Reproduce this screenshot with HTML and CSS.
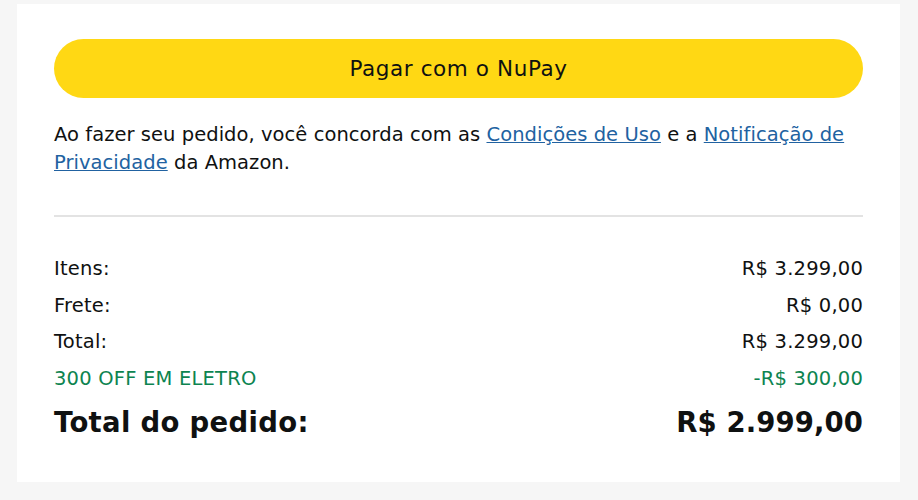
FILE: index.html
```html
<!DOCTYPE html>
<html lang="pt-BR">
<head>
<meta charset="utf-8">
<link rel="stylesheet" href="styles.css">
</head>
<body>
<div class="card">
  <button class="pay-btn">Pagar com o NuPay</button>
  <p class="terms">Ao fazer seu pedido, você concorda com as <a href="#">Condições de Uso</a> e a <a href="#">Notificação de Privacidade</a> da Amazon.</p>
  <hr class="divider">
  <div class="summary">
    <div class="row"><span>Itens:</span><span>R$ 3.299,00</span></div>
    <div class="row"><span>Frete:</span><span>R$ 0,00</span></div>
    <div class="row"><span>Total:</span><span>R$ 3.299,00</span></div>
    <div class="row promo"><span>300 OFF EM ELETRO</span><span>-R$ 300,00</span></div>
    <div class="row grand"><span>Total do pedido:</span><span>R$ 2.999,00</span></div>
  </div>
</div>
</body>
</html>
```
FILE: styles.css
```css
html, body {
  margin: 0;
  background: #f6f6f6;
  font-family: "DejaVu Sans", "Noto Sans", sans-serif;
  color: #0f1111;
}
.card {
  background: #fff;
  margin: 4px 18px 0 17px;
  height: 478px;
  box-sizing: border-box;
  padding: 35px 37px 0 37px;
}
.pay-btn {
  display: block;
  width: 100%;
  height: 59px;
  border: none;
  border-radius: 30px;
  background: #ffd814;
  color: #0f1111;
  font-family: inherit;
  font-size: 21.5px;
  letter-spacing: 0.6px;
  cursor: pointer;
}
.terms {
  margin: 23px 0 0;
  font-size: 19.5px;
  letter-spacing: 0.05px;
  line-height: 28px;
}
.terms a {
  color: #2162a1;
  text-decoration: underline;
}
.divider {
  border: none;
  border-top: 2px solid #e3e3e3;
  margin: 38px 0 0;
}
.summary {
  margin-top: 34px;
  display: flex;
  flex-direction: column;
}
.row {
  display: flex;
  justify-content: space-between;
  font-size: 19.5px;
  letter-spacing: 0.2px;
  line-height: 36.5px;
}
.promo {
  color: #0d8450;
}
.grand {
  font-size: 27.5px;
  font-weight: 700;
  letter-spacing: 0.1px;
  line-height: 50px;
}
.grand span:first-child {
  letter-spacing: 0.3px;
}
```
